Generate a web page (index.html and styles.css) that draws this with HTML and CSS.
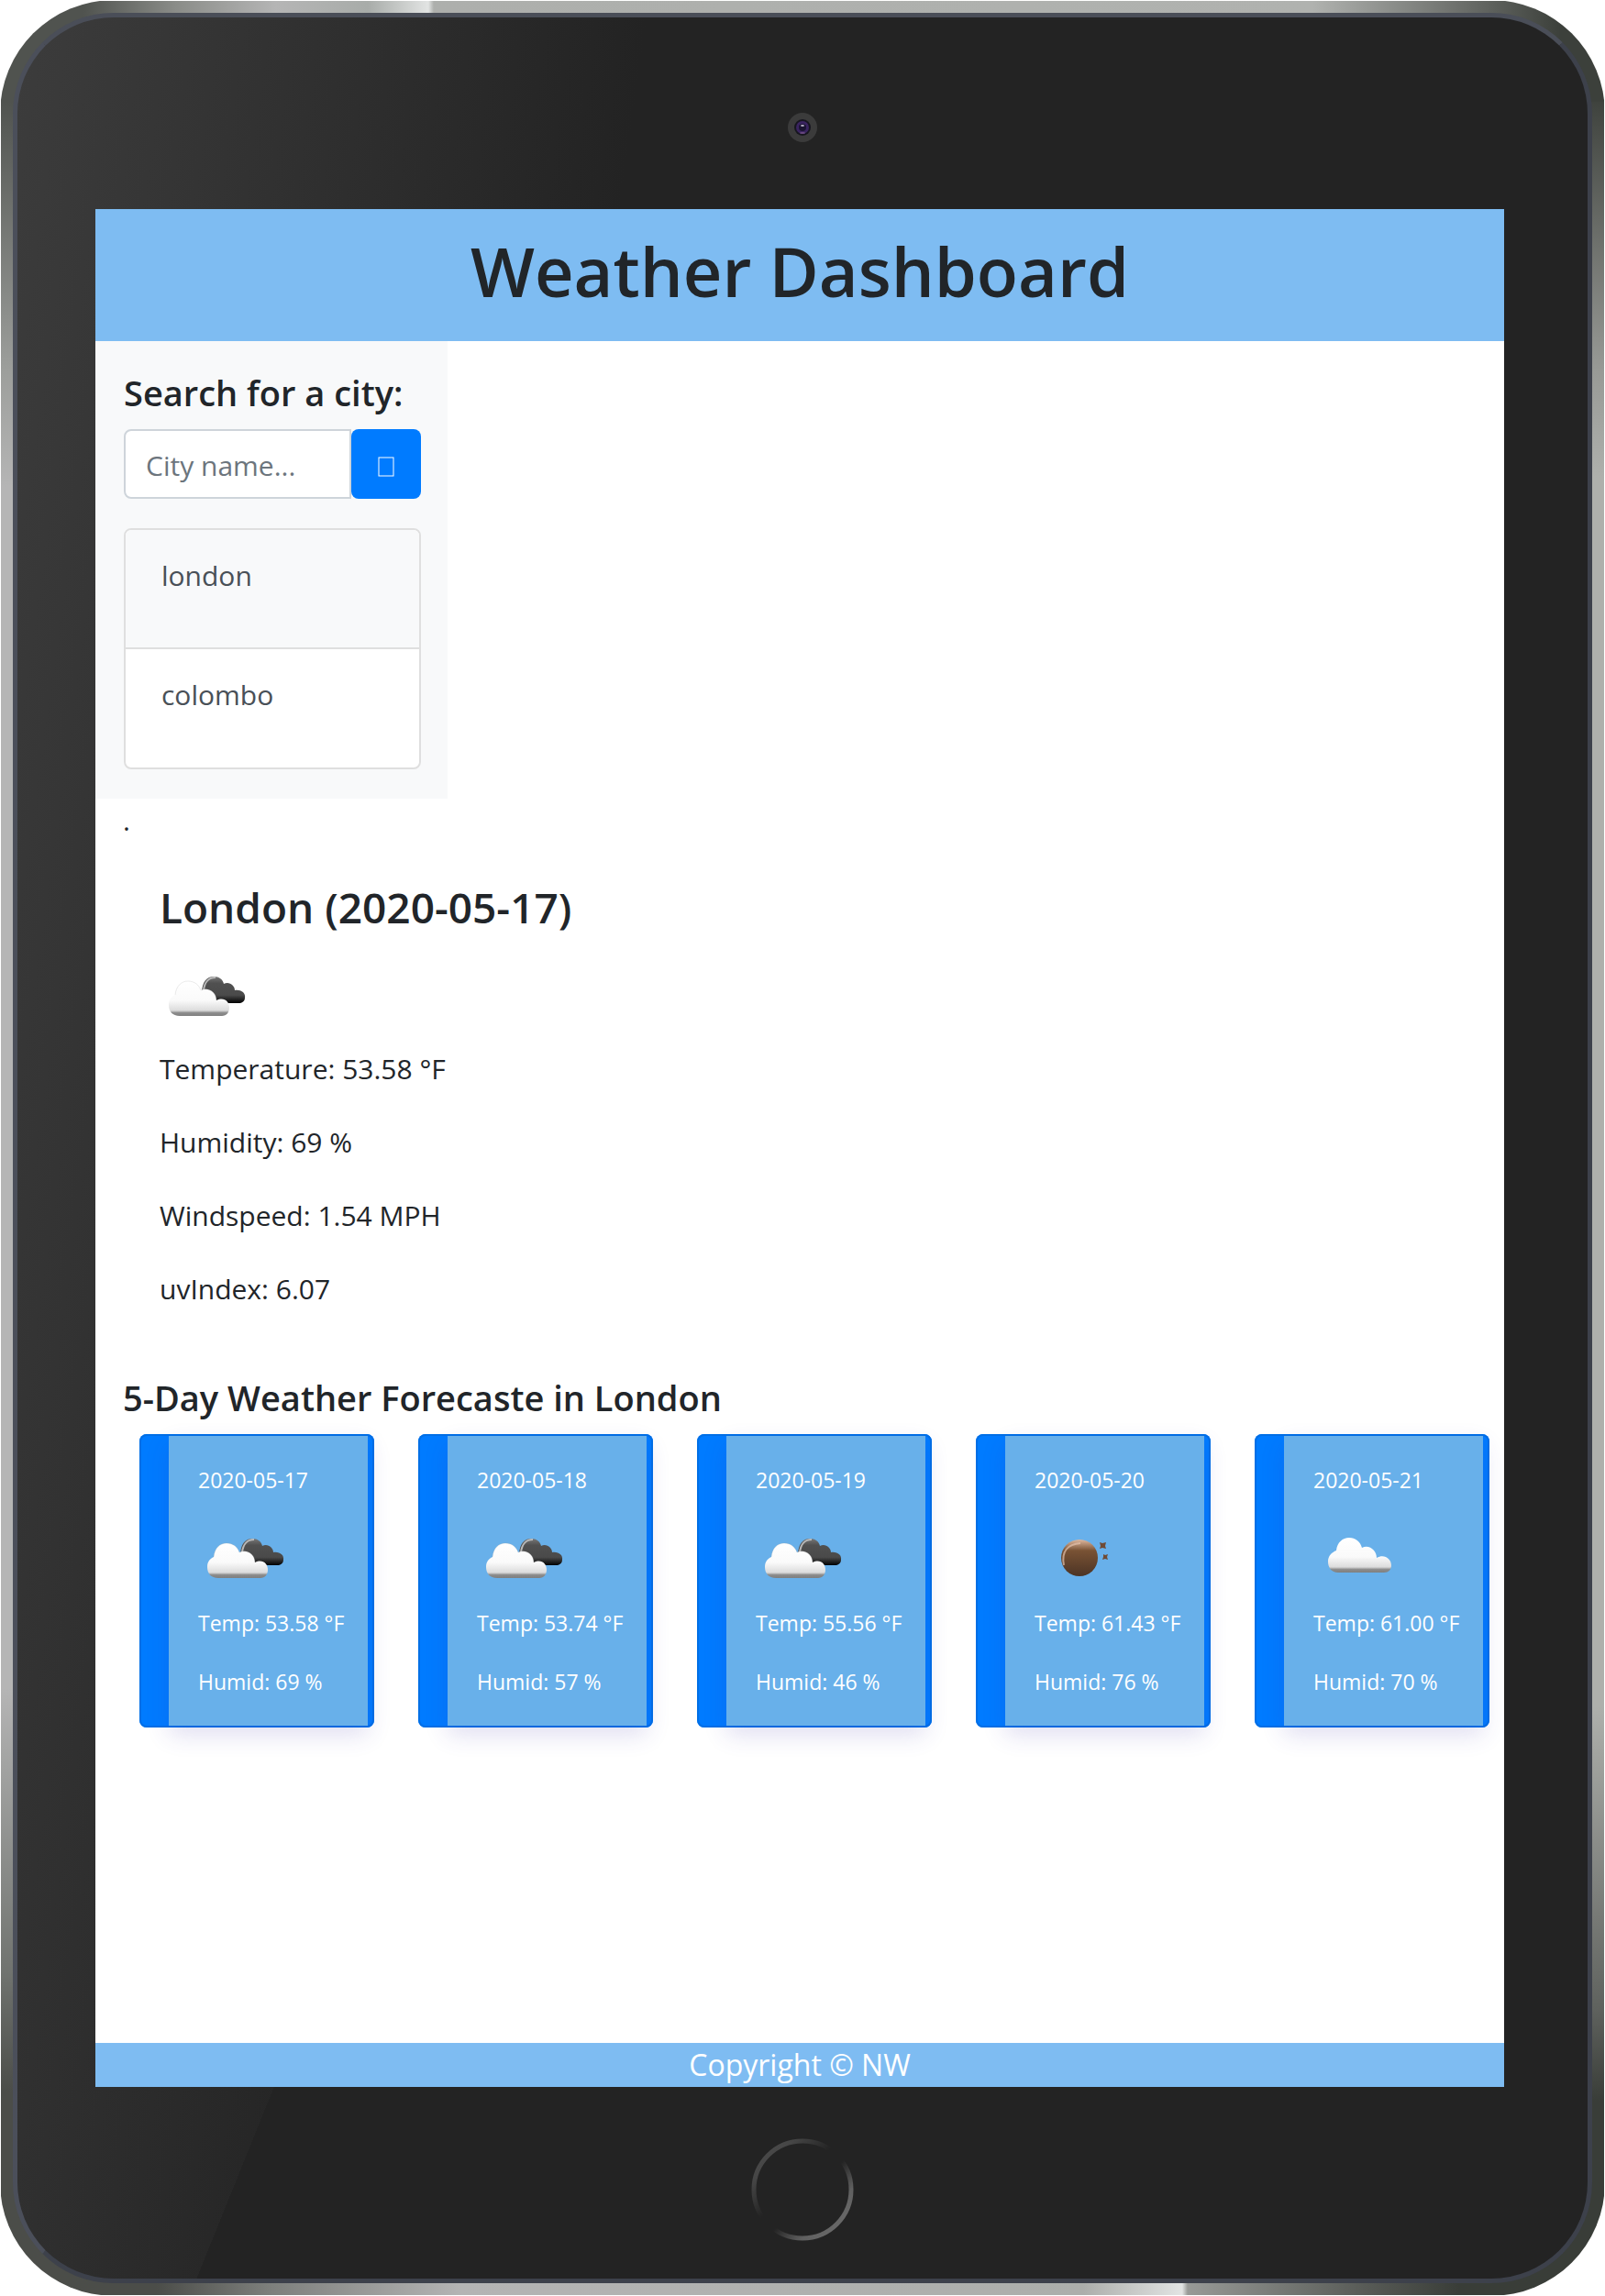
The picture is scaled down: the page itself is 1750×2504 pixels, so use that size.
FILE: index.html
```html
<!DOCTYPE html>
<html lang="en">
<head>
<meta charset="utf-8">
<title>Weather Dashboard</title>
<meta name="viewport" content="width=device-width, initial-scale=1">
<link rel="stylesheet" href="styles.css">
</head>
<body>
<!-- shared weather drawings -->
<svg class="defs" aria-hidden="true">
  <defs>
    <linearGradient id="white-fill" x1="0" y1="0" x2="0" y2="1">
      <stop offset="0" stop-color="#fff"/><stop offset=".55" stop-color="#fafafa"/><stop offset=".84" stop-color="#dcdcdc"/><stop offset=".91" stop-color="#8c8c8c"/><stop offset="1" stop-color="#808080"/>
    </linearGradient>
    <linearGradient id="dark-fill" x1="0" y1="0" x2="0" y2="1">
      <stop offset="0" stop-color="#777"/><stop offset=".25" stop-color="#505050"/><stop offset=".7" stop-color="#4a4a4a"/><stop offset="1" stop-color="#000"/>
    </linearGradient>
    <linearGradient id="moon-fill" x1="0" y1="0" x2="0" y2="1">
      <stop offset="0" stop-color="#e0b9a0"/><stop offset=".3" stop-color="#795234"/><stop offset="1" stop-color="#4c3425"/>
    </linearGradient>
    <symbol id="broken-clouds" viewBox="0 0 100 100">
      <path d="M46 44C47 34 51 28 59 28C65 28 69 31 70 36C76 33 82 38 82 43C89 42 94 46 93 51C93 55 90 57 86 57H60Z" fill="url(#dark-fill)"/>
      <path d="M48 43C49 34 54 29 61 29" fill="none" stroke="#bbb" stroke-width="2"/>
      <path d="M22 71C14 71 10 66 10 59C10 53 13 50 17 48C18 38 24 33 31 33C38 33 43 37 45 43C53 39 62 45 62 54C70 50 76 55 76 62C76 67 73 71 68 71Z" fill="url(#white-fill)"/>
      <path d="M17 48C18 38 24 33 31 33C38 33 43 37 45 43C53 39 62 45 62 54" fill="none" stroke="#999" stroke-opacity=".2" stroke-width="1"/>
    </symbol>
    <symbol id="cloud" viewBox="0 0 100 100">
      <path d="M27 65C20 65 16 60 16 53C16 47 20 43 25 41C26 32 32 27 39 27C46 27 51 31 53 38C61 34 69 41 69 49C77 44 85 50 85 57C85 62 82 65 77 65Z" fill="url(#white-fill)"/>
    </symbol>
    <symbol id="moon" viewBox="0 0 100 100">
      <circle cx="49" cy="49" r="20" fill="url(#moon-fill)"/>
      <path d="M32 57C29 42 36 34 50 33" fill="none" stroke="#e5c3ae" stroke-opacity=".7" stroke-width="2"/>
      <path d="M71 32l3 1 4-1-1 4 1 3-4-1-3 1 1-3zM75 45l2 1 3-1-1 3 1 3-3-1-3 1 1-3z" fill="#704b35"/>
    </symbol>
  </defs>
</svg>
<div class="device">
  <div class="bezel">
    <div class="bezel-top">
      <svg class="camera" viewBox="0 0 32 32" aria-hidden="true">
        <circle cx="16" cy="16" r="16" fill="#3b3b3b"/>
        <circle cx="16" cy="16" r="9" fill="#17161f"/>
        <circle cx="16" cy="16" r="7" fill="#3a2460"/>
        <circle cx="16" cy="16" r="4" fill="#1a1430"/>
        <ellipse cx="16" cy="14" rx="2" ry="1" fill="#b9b0c8"/>
        <ellipse cx="16" cy="22" rx="3" ry="1" fill="#6a4a80"/>
      </svg>
    </div>
    <div class="screen">
      <header class="header"><h1>Weather Dashboard</h1></header>
      <aside class="sidebar">
        <h4><label for="city">Search for a city:</label></h4>
        <form class="search">
          <input id="city" type="text" placeholder="City name...">
          <button type="button" aria-label="Search"><svg width="18" height="22" viewBox="0 0 18 22" aria-hidden="true"><rect x="1" y="1" width="16" height="20" fill="none" stroke="#fff"/></svg></button>
        </form>
        <ul class="history">
          <li><a href="#london">london</a></li>
          <li><a href="#colombo">colombo</a></li>
        </ul>
      </aside>
      <main class="main">
        <p>.</p>
        <section class="today">
          <h3>London (2020-05-17)</h3>
          <svg class="icon" role="img" aria-label="Broken clouds"><use href="#broken-clouds"/></svg>
          <p>Temperature: 53.58 °F</p>
          <p>Humidity: 69 %</p>
          <p>Windspeed: 1.54 MPH</p>
          <p>uvIndex: 6.07</p>
        </section>
        <h4>5-Day Weather Forecaste in London</h4>
        <div class="forecast">
          <article class="card"><div class="card-body"><p>2020-05-17</p><svg class="icon" role="img" aria-label="Broken clouds"><use href="#broken-clouds"/></svg><p>Temp: 53.58 °F</p><p>Humid: 69 %</p></div></article>
          <article class="card"><div class="card-body"><p>2020-05-18</p><svg class="icon" role="img" aria-label="Broken clouds"><use href="#broken-clouds"/></svg><p>Temp: 53.74 °F</p><p>Humid: 57 %</p></div></article>
          <article class="card"><div class="card-body"><p>2020-05-19</p><svg class="icon" role="img" aria-label="Broken clouds"><use href="#broken-clouds"/></svg><p>Temp: 55.56 °F</p><p>Humid: 46 %</p></div></article>
          <article class="card"><div class="card-body"><p>2020-05-20</p><svg class="icon" role="img" aria-label="Clear night"><use href="#moon"/></svg><p>Temp: 61.43 °F</p><p>Humid: 76 %</p></div></article>
          <article class="card"><div class="card-body"><p>2020-05-21</p><svg class="icon" role="img" aria-label="Cloudy"><use href="#cloud"/></svg><p>Temp: 61.00 °F</p><p>Humid: 70 %</p></div></article>
        </div>
      </main>
      <footer class="footer">Copyright © NW</footer>
    </div>
    <div class="bezel-bottom">
      <svg class="home" viewBox="0 0 112 112" aria-hidden="true">
        <defs>
          <linearGradient id="home-ring" x1="0" y1="0" x2="1" y2="1">
            <stop offset="0" stop-color="#4c4c4c"/><stop offset=".2" stop-color="#464646"/><stop offset=".43" stop-color="#232323"/><stop offset=".56" stop-color="#232323"/><stop offset=".75" stop-color="#606060"/><stop offset="1" stop-color="#707070"/>
          </linearGradient>
        </defs>
        <circle cx="56" cy="56" r="53" fill="none" stroke="url(#home-ring)" stroke-width="5"/>
      </svg>
    </div>
  </div>
</div>
</body>
</html>
```
FILE: styles.css
```css
* { box-sizing: border-box; }

body {
  margin: 0;
  background: #fff;
  color: #212529;
  font: 400 30px/48px "Open Sans", "Noto Sans", sans-serif;
}

h1, h3, h4, p, ul { margin: 0; }
h1, h3, h4 { font-weight: 600; }
h1 { font-size: 74px; line-height: 96px; }
h3 { font-size: 46px; line-height: 60px; }
h4 { font-size: 38px; line-height: 48px; margin-bottom: 16px; }

.defs { position: absolute; width: 0; height: 0; }

/* metal edge */
.device {
  display: flex;
  min-height: 100vh;
  padding: 13px;
  border: 1px solid transparent;
  border-radius: 124px;
  background:
    linear-gradient(to right, #50534f 90px, #8a8c88 190px, #b5b5b5 300px, #a8aca9 400px, #e2e4e3 466px, #adafac 472px, #b0b2af 1430px, #60635f 1620px, #3c403b 1700px) top / 100% 110px no-repeat,
    linear-gradient(to right, #4b4d49 170px, #7c7e7b 290px, #b4b4b4 500px, #acaeab 1180px, #e2e4e3 1288px, #989a97 1294px, #5a5d59 1480px, #393d38 1590px) bottom / 100% 110px no-repeat,
    linear-gradient(#50534f 110px, #9c9e9b 400px, #b5b5b5 530px, #b5b5b5 1840px, #70736f 2150px, #4b4d49 2280px) left / 50% 100% no-repeat,
    linear-gradient(#3c403b 100px, #979995 400px, #aeb0ac 520px, #aeb0ac 1860px, #5f625e 2190px, #393d38 2290px) right / 50% 100% no-repeat;
}

/* glass, with a soft sheen that ends on a slanted line */
.bezel {
  flex: 1;
  display: flex;
  flex-direction: column;
  min-width: 0;
  padding: 0 85px;
  border: 5px solid #3d414b;
  border-top-color: #4a4e58;
  border-left-color: #4b4f5a;
  border-radius: 110px;
  background:
    linear-gradient(112deg, transparent 44%, #232323 44%),
    linear-gradient(98deg, #3c3c3c 0, #232323 680px);
}

.bezel-top, .bezel-bottom {
  display: flex;
  justify-content: center;
  align-items: center;
  height: 209px;
}
.bezel-top { padding-top: 30px; }
.bezel-bottom { padding-top: 14px; }
.camera { width: 32px; height: 32px; }
.home { width: 112px; height: 112px; }

.screen {
  flex: 1;
  display: flex;
  flex-direction: column;
  margin-right: 6px;
  background: #fff;
}

.header { padding: 20px 24px 28px; text-align: center; background: #7ebcf2; }

.sidebar { width: 25%; padding: 32px 29px 32px 31px; background: #f8f9fa; }

.search { display: flex; margin-bottom: 32px; }
.search input {
  flex: 1;
  min-width: 0;
  height: 76px;
  padding: 2px 22px 0;
  border: 2px solid #ced4da;
  border-radius: 8px 0 0 8px;
  background: #fff;
  color: #495057;
  font: inherit;
}
.search input::placeholder { color: #6c757d; opacity: 1; }
.search button {
  width: 76px;
  height: 76px;
  padding: 8px 0 0;
  border: 0;
  border-radius: 8px;
  background: #007bff;
}

.history {
  padding: 0;
  list-style: none;
  border: 2px solid #dfdfdf;
  border-radius: 8px;
  background: #fff;
  overflow: hidden;
}
.history li { height: 129px; padding: 26px 39px; }
.history li:first-child { height: 130px; background: #f8f9fa; border-bottom: 2px solid #dfdfdf; }
.history a { color: #495057; text-decoration: none; }

.main { flex: 1; padding: 0 0 32px 30px; }
.today { padding: 40px 40px 70px; }
.today h3 { margin-bottom: 18px; }
.today p + p { margin-top: 32px; }
.icon { display: block; width: 100px; height: 100px; }

.today .icon { margin-bottom: 5px; }

.forecast { display: flex; gap: 48px; padding: 0 16px 0 18px; }
.card {
  flex: 1;
  min-width: 0;
  padding: 2px 7px 2px 32px;
  border-radius: 8px;
  background: #007bff;
  box-shadow: inset 0 0 0 2px #006fe6;
}
.card-body {
  height: 316px;
  padding: 30px 0 0 32px;
  background: #68b0ea;
  color: #fff;
  font-size: 23px;
  line-height: 36px;
  white-space: nowrap;
  box-shadow: 0 10px 24px rgba(60, 50, 170, .16);
}
.card-body .icon { margin: 18px 0 2px; }
.card-body p + p { margin-top: 28px; }

.footer { text-align: center; font-size: 32px; color: #fff; background: #7ebcf2; }
```
